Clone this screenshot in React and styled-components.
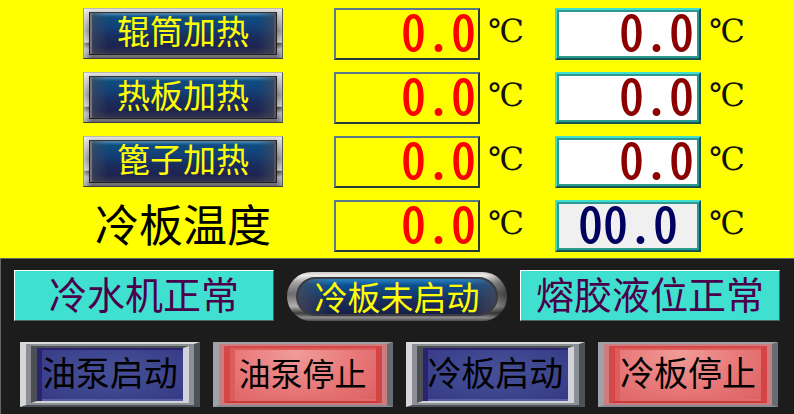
import React, { useState } from 'react';
import styled, { createGlobalStyle, css } from 'styled-components';

const GlobalStyle = createGlobalStyle`
  * {
    box-sizing: border-box;
  }

  body {
    margin: 0;
    background-color: #1c1c1c;
    font-family: 'Noto Sans CJK SC', sans-serif;
  }
`;

const HeatingPanel = styled.section`
  display: grid;
  grid-template-columns: minmax(0, 215fr) minmax(0, 185fr) minmax(0, 185fr);
  column-gap: 36px;
  row-gap: 12px;
  padding: 8px 54px 6px 83px;
  background-color: #ffff00;
`;

const LabelCell = styled.div`
  height: 52px;
  padding-right: 15px;
`;

const ZoneLabel = styled.span`
  display: block;
  font-size: 44px;
  line-height: 46px;
  text-align: center;
  white-space: nowrap;
  color: #000;
`;

const Reading = styled.div`
  display: flex;
  gap: 8px;
  height: 52px;
`;

const valueText = css`
  flex: 1;
  min-width: 0;
  height: 52px;
  font-family: 'Noto Sans CJK SC', sans-serif;
  font-feature-settings: 'hwid';
  font-size: 50px;
  font-weight: 500;
  line-height: 38px;
`;

const ActualValue = styled.output`
  ${valueText}
  padding-right: 2px;
  border: 2px solid;
  border-color: #5a7a8c #28383c #28383c #5a7a8c;
  text-align: right;
  color: #ff0000;
`;

const SetValue = styled.input`
  ${valueText}
  padding: 0 5px 10px;
  border: 2px solid;
  border-color: #40e0d0 #145450 #145450 #40e0d0;
  border-radius: 0;
  outline: none;
  box-shadow: inset 0 0 0 2px #2c9a90;
  background-color: ${(props) => (props.readOnly ? '#f0f0f0' : '#fff')};
  text-align: ${(props) => (props.readOnly ? 'center' : 'right')};
  color: ${(props) => (props.readOnly ? '#000060' : '#8b0000')};
`;

const Unit = styled.span`
  width: 31px;
  font-family: 'DejaVu Serif', serif;
  font-size: 32px;
  line-height: 46px;
  color: #111;
`;

/* Marco metálico con cara azul */
const MetalButton = styled.button`
  display: block;
  width: 100%;
  height: 51px;
  padding: 3px 5px;
  border: 1px solid;
  border-color: #b8b8b8 #55555c #3a3a3c #9a9a9a;
  background:
    linear-gradient(90deg, rgba(255, 255, 255, 0.5) 0, rgba(255, 255, 255, 0) 4%, rgba(255, 255, 255, 0) 97%, rgba(255, 255, 255, 0.3) 100%),
    linear-gradient(180deg, #e0e0dc 0, #b8b8b8 14%, #77777a 45%, #b4b4b6 68%, #303030 70%, #9c9c9c 82%, #66666a 100%);
  cursor: pointer;
`;

const MetalFace = styled.span`
  display: block;
  height: 43px;
  border: 1px solid #202024;
  border-top-color: #333;
  box-shadow: inset 2px 0 1px #77777c, inset -2px 0 1px #55555c;
  background:
    linear-gradient(90deg, rgba(70, 75, 90, 0.7) 0, rgba(70, 75, 90, 0) 10%, rgba(70, 75, 90, 0) 90%, rgba(70, 75, 90, 0.7) 100%),
    linear-gradient(180deg, #4d8fb8 0, #0f4d80 10%, #123f75 35%, #1a2c5c 60%, #1d2450 82%, #30344c 100%);
  font-family: 'Noto Sans CJK SC', sans-serif;
  font-size: 33px;
  line-height: 34px;
  text-align: center;
  white-space: nowrap;
  color: #ffff00;
`;

const PillButton = styled(MetalButton)`
  align-self: end;
  height: 49px;
  padding: 5px 9px;
  border: 0;
  border-radius: 25px;
  background:
    linear-gradient(90deg, rgba(40, 40, 40, 0) 90%, rgba(20, 20, 20, 0.5) 100%),
    linear-gradient(180deg, #c8c8c8 0, #f0eeea 7%, #a0a0a0 22%, #6c6c70 45%, #b0b0b0 70%, #3c3c3c 84%, #8c8c8c 93%, #4c4c4c 100%);
`;

const PillFace = styled(MetalFace)`
  height: 39px;
  border: 2px solid #3a3a40;
  border-radius: 20px;
  box-shadow: none;
  background:
    linear-gradient(90deg, rgba(70, 75, 90, 0.8) 0, rgba(70, 75, 90, 0) 16%, rgba(70, 75, 90, 0) 84%, rgba(70, 75, 90, 0.8) 100%),
    linear-gradient(180deg, #2a84c4 0, #0c5090 18%, #123f75 40%, #1a2c5c 62%, #16204a 100%);
`;

const ControlPanel = styled.section`
  padding: 11px 0 7px;
  border-top: 1px solid #666;
  border-left: 1px solid #666;
  background-color: #1c1c1c;
`;

const StatusRow = styled.div`
  display: grid;
  grid-template-columns: 260fr 220fr 260fr;
  gap: 13px;
  padding: 0 14px 0 13px;
`;

const StatusBox = styled.div`
  height: 51px;
  border: 1px solid;
  border-color: #fff #4a6464 #4a6464 #fff;
  background-color: #40e0d0;
  font-size: 38px;
  line-height: 44px;
  text-align: center;
  white-space: nowrap;
  color: #4b004b;
`;

const ActionRow = styled.div`
  display: grid;
  grid-template-columns: repeat(4, 1fr);
  gap: 13px;
  margin-top: 21px;
  padding: 0 16px 0 19px;
`;

const tones = {
  start: {
    outer: '#dcdce0 #4c5256 #4c5256 #d6d6da',
    middle: '#8c9094',
    inner: '#4b5054 #d2d2da #d2d2da #4b5054',
    shade: '#2c2272',
    light: '#5860a0',
    face: 'radial-gradient(ellipse at 50% 45%, #465096 0, #3e4690 50%, #363882 100%)',
  },
  stop: {
    outer: '#9ea2a6 #666c70 #848a8e #9ea2a6',
    middle: '#cc7c7e',
    inner: '#d64848 #d44444 #c83a3a #d64848',
    shade: '#dd5c5c',
    light: '#e06c6c',
    face: 'radial-gradient(ellipse at 45% 10%, #f09c98 0, #e87a7a 50%, #dc6062 100%)',
  },
};

const ActionButton = styled.button`
  height: 65px;
  padding: 0;
  border: solid;
  border-width: 2px 6px;
  border-color: ${(props) => tones[props.$tone].outer};
  background-color: ${(props) => tones[props.$tone].middle};
  cursor: pointer;
`;

const ActionFace = styled.span`
  display: block;
  height: 57px;
  margin: 2px 5px;
  border: solid;
  border-width: 2px 6px;
  border-color: ${(props) => tones[props.$tone].inner};
  box-shadow: inset 5px 2px 0 ${(props) => tones[props.$tone].shade}, inset 0 -2px 0 ${(props) => tones[props.$tone].light};
  background: ${(props) => tones[props.$tone].face};
  font-family: 'Noto Sans CJK SC', sans-serif;
  font-size: ${(props) => (props.$small ? 32 : 34)}px;
  line-height: 48px;
  white-space: nowrap;
  color: #000;
`;

const zones = [
  { id: 'roller', name: '辊筒加热', actual: '0.0', target: '0.0' },
  { id: 'plate', name: '热板加热', actual: '0.0', target: '0.0' },
  { id: 'comb', name: '篦子加热', actual: '0.0', target: '0.0' },
  { id: 'cold', name: '冷板温度', actual: '0.0', target: '00.0', fixed: true },
];

const actions = [
  { name: '油泵启动', tone: 'start' },
  { name: '油泵停止', tone: 'stop', small: true },
  { name: '冷板启动', tone: 'start' },
  { name: '冷板停止', tone: 'stop' },
];

const Zone = ({ zone }) => {
  const [target, setTarget] = useState(zone.target);

  return (
    <>
      <LabelCell>
        {zone.fixed ? (
          <ZoneLabel id={zone.id}>{zone.name}</ZoneLabel>
        ) : (
          <MetalButton type="button" id={zone.id}>
            <MetalFace>{zone.name}</MetalFace>
          </MetalButton>
        )}
      </LabelCell>
      <Reading>
        <ActualValue aria-labelledby={zone.id}>{zone.actual}</ActualValue>
        <Unit>℃</Unit>
      </Reading>
      <Reading>
        <SetValue
          type="text"
          aria-labelledby={zone.id}
          value={target}
          readOnly={zone.fixed}
          onChange={(e) => setTarget(e.target.value)}
        />
        <Unit>℃</Unit>
      </Reading>
    </>
  );
};

const App = () => (
  <main>
    <GlobalStyle />
    <HeatingPanel>
      {zones.map((zone) => (
        <Zone key={zone.id} zone={zone} />
      ))}
    </HeatingPanel>
    <ControlPanel>
      <StatusRow>
        <StatusBox>冷水机正常</StatusBox>
        <PillButton type="button">
          <PillFace>冷板未启动</PillFace>
        </PillButton>
        <StatusBox>熔胶液位正常</StatusBox>
      </StatusRow>
      <ActionRow>
        {actions.map((action) => (
          <ActionButton key={action.name} type="button" $tone={action.tone}>
            <ActionFace $tone={action.tone} $small={action.small}>
              {action.name}
            </ActionFace>
          </ActionButton>
        ))}
      </ActionRow>
    </ControlPanel>
  </main>
);

export default App;
